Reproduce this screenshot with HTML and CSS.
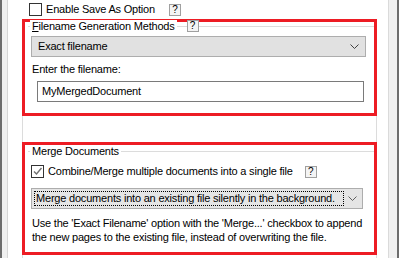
FILE: index.html
```html
<!DOCTYPE html>
<html>
<head>
<meta charset="utf-8">
<link rel="stylesheet" href="styles.css">
</head>
<body>
<div class="edge-left"></div>
<div class="main">
  <div class="top-row">
    <span class="cb"></span>
    <span class="cb-label">Enable Save As Option</span>
    <span class="help">?</span>
  </div>
  <div class="redbox box1">
    <div class="legend-row">
      <span class="legend"><u>F</u>ilename Generation Methods</span>
      <span class="help help-legend">?</span>
    </div>
    <div class="combo combo1">
      <span class="combo-text">Exact filename</span>
      <svg class="chev" width="9" height="5" viewBox="0 0 9 5"><path d="M0.5 0.5 L4.5 4.5 L8.5 0.5" fill="none" stroke="#404040" stroke-width="1"/></svg>
    </div>
    <div class="label">Enter the filename:</div>
    <div class="input">MyMergedDocument</div>
  </div>
  <div class="spacer"></div>
  <div class="redbox box2">
    <div class="legend-row">
      <span class="legend">Merge Documents</span>
    </div>
    <div class="check-row">
      <span class="cb cb-checked"><svg width="11" height="11" viewBox="0 0 11 11"><path d="M2 5.5 L4.5 8 L9.5 2" fill="none" stroke="#707070" stroke-width="1.4"/></svg></span>
      <span class="cb-label">Combine/Merge multiple documents into a single file</span>
      <span class="help help-merge">?</span>
    </div>
    <div class="combo combo2">
      <span class="focus">Merge documents into an existing file silently in the background.</span>
      <svg class="chev" width="9" height="5" viewBox="0 0 9 5"><path d="M0.5 0.5 L4.5 4.5 L8.5 0.5" fill="none" stroke="#606060" stroke-width="1"/></svg>
    </div>
    <p class="desc">Use the 'Exact Filename' option with the 'Merge...' checkbox to append the new pages to the existing file, instead of overwriting the file.</p>
  </div>
  <div class="spacer spacer-bottom"></div>
</div>
<div class="edge-right"></div>
</body>
</html>
```
FILE: styles.css
```css
html, body {
  margin: 0;
  padding: 0;
}
body {
  width: 399px;
  height: 258px;
  overflow: hidden;
  display: flex;
  background: #ffffff;
  font-family: "Liberation Sans", Arial, sans-serif;
  font-size: 11px;
  letter-spacing: -0.2px;
  color: #000;
}
.edge-left {
  width: 5px;
  border-left: 2px solid #6d6d6d;
  border-right: 1px solid #d6d6d6;
  background: #f0f0f0;
}
.main {
  flex: 1;
  display: flex;
  flex-direction: column;
}
.edge-right {
  width: 8px;
  border-left: 1px solid #dadada;
  border-right: 2px solid #6d6d6d;
  background: #f0f0f0;
}
.top-row {
  height: 19px;
  display: flex;
  align-items: flex-start;
  padding-left: 21px;
  box-sizing: border-box;
  padding-top: 3px;
}
.cb {
  width: 11px;
  height: 11px;
  border: 1px solid #333;
  background: #fff;
  display: inline-flex;
  flex: none;
}
.cb-label {
  margin-left: 4px;
  line-height: 13px;
  white-space: nowrap;
}
.help {
  width: 10px;
  height: 10px;
  border: 1px solid #a0a0a0;
  background: #f4f4f4;
  font-size: 10px;
  line-height: 10px;
  text-align: center;
  letter-spacing: 0;
  flex: none;
}
.top-row .help {
  margin-left: 14px;
  margin-top: 1px;
}
.redbox {
  margin-left: 14px;
  width: 355px;
  box-sizing: border-box;
  border: 3px solid #ed1c24;
  background: #fff;
}
.box1 {
  height: 97px;
}
.box2 {
  height: 113px;
}
.spacer {
  margin-left: 14px;
  width: 355px;
  box-sizing: border-box;
  height: 27px;
  border-left: 1px solid #dcdcdc;
  border-right: 1px solid #dcdcdc;
}
.spacer-bottom {
  height: 3px;
}
.legend-row {
  height: 13px;
  margin-top: -2px;
  margin-left: 3px;
  display: flex;
  align-items: center;
  background: linear-gradient(to bottom, transparent 6px, #dcdcdc 6px, #dcdcdc 7px, transparent 7px);
}
.box2 .legend-row {
  margin-top: 0;
}
.legend {
  background: #fff;
  padding: 0 2px;
  margin-left: 2px;
  line-height: 13px;
  white-space: nowrap;
}
.help-legend {
  margin-left: 10px;
}
.combo {
  box-sizing: border-box;
  height: 21px;
  border: 1px solid #adadad;
  background: #e1e1e1;
  display: flex;
  align-items: center;
  position: relative;
}
.combo1 {
  margin-top: 3px;
  margin-left: 6px;
  width: 335px;
}
.combo-text {
  margin-left: 6px;
  white-space: nowrap;
}
.chev {
  position: absolute;
  right: 6px;
  top: 7px;
}
.combo2 .chev {
  right: 5px;
}
.label {
  margin-top: 5px;
  margin-left: 7px;
  line-height: 15px;
}
.input {
  margin-top: 4px;
  margin-left: 12px;
  width: 327px;
  height: 21px;
  box-sizing: border-box;
  border: 1px solid #7a7a7a;
  padding-left: 4px;
  line-height: 19px;
  white-space: nowrap;
}
.check-row {
  margin-top: 7px;
  margin-left: 6px;
  display: flex;
  align-items: center;
  height: 13px;
}
.cb-checked {
  align-items: center;
  justify-content: center;
}
.help-merge {
  margin-left: 12px;
}
.combo2 {
  margin-top: 10px;
  margin-left: 6px;
  width: 332px;
  background: #e5e5e5;
}
.focus {
  margin-left: 2px;
  width: 310px;
  height: 15px;
  box-sizing: border-box;
  border: 1px dotted #000;
  line-height: 13px;
  padding-left: 1px;
  white-space: nowrap;
  overflow: hidden;
}
.desc {
  margin: 7px 0 0 7px;
  line-height: 14px;
  width: 345px;
}
```
